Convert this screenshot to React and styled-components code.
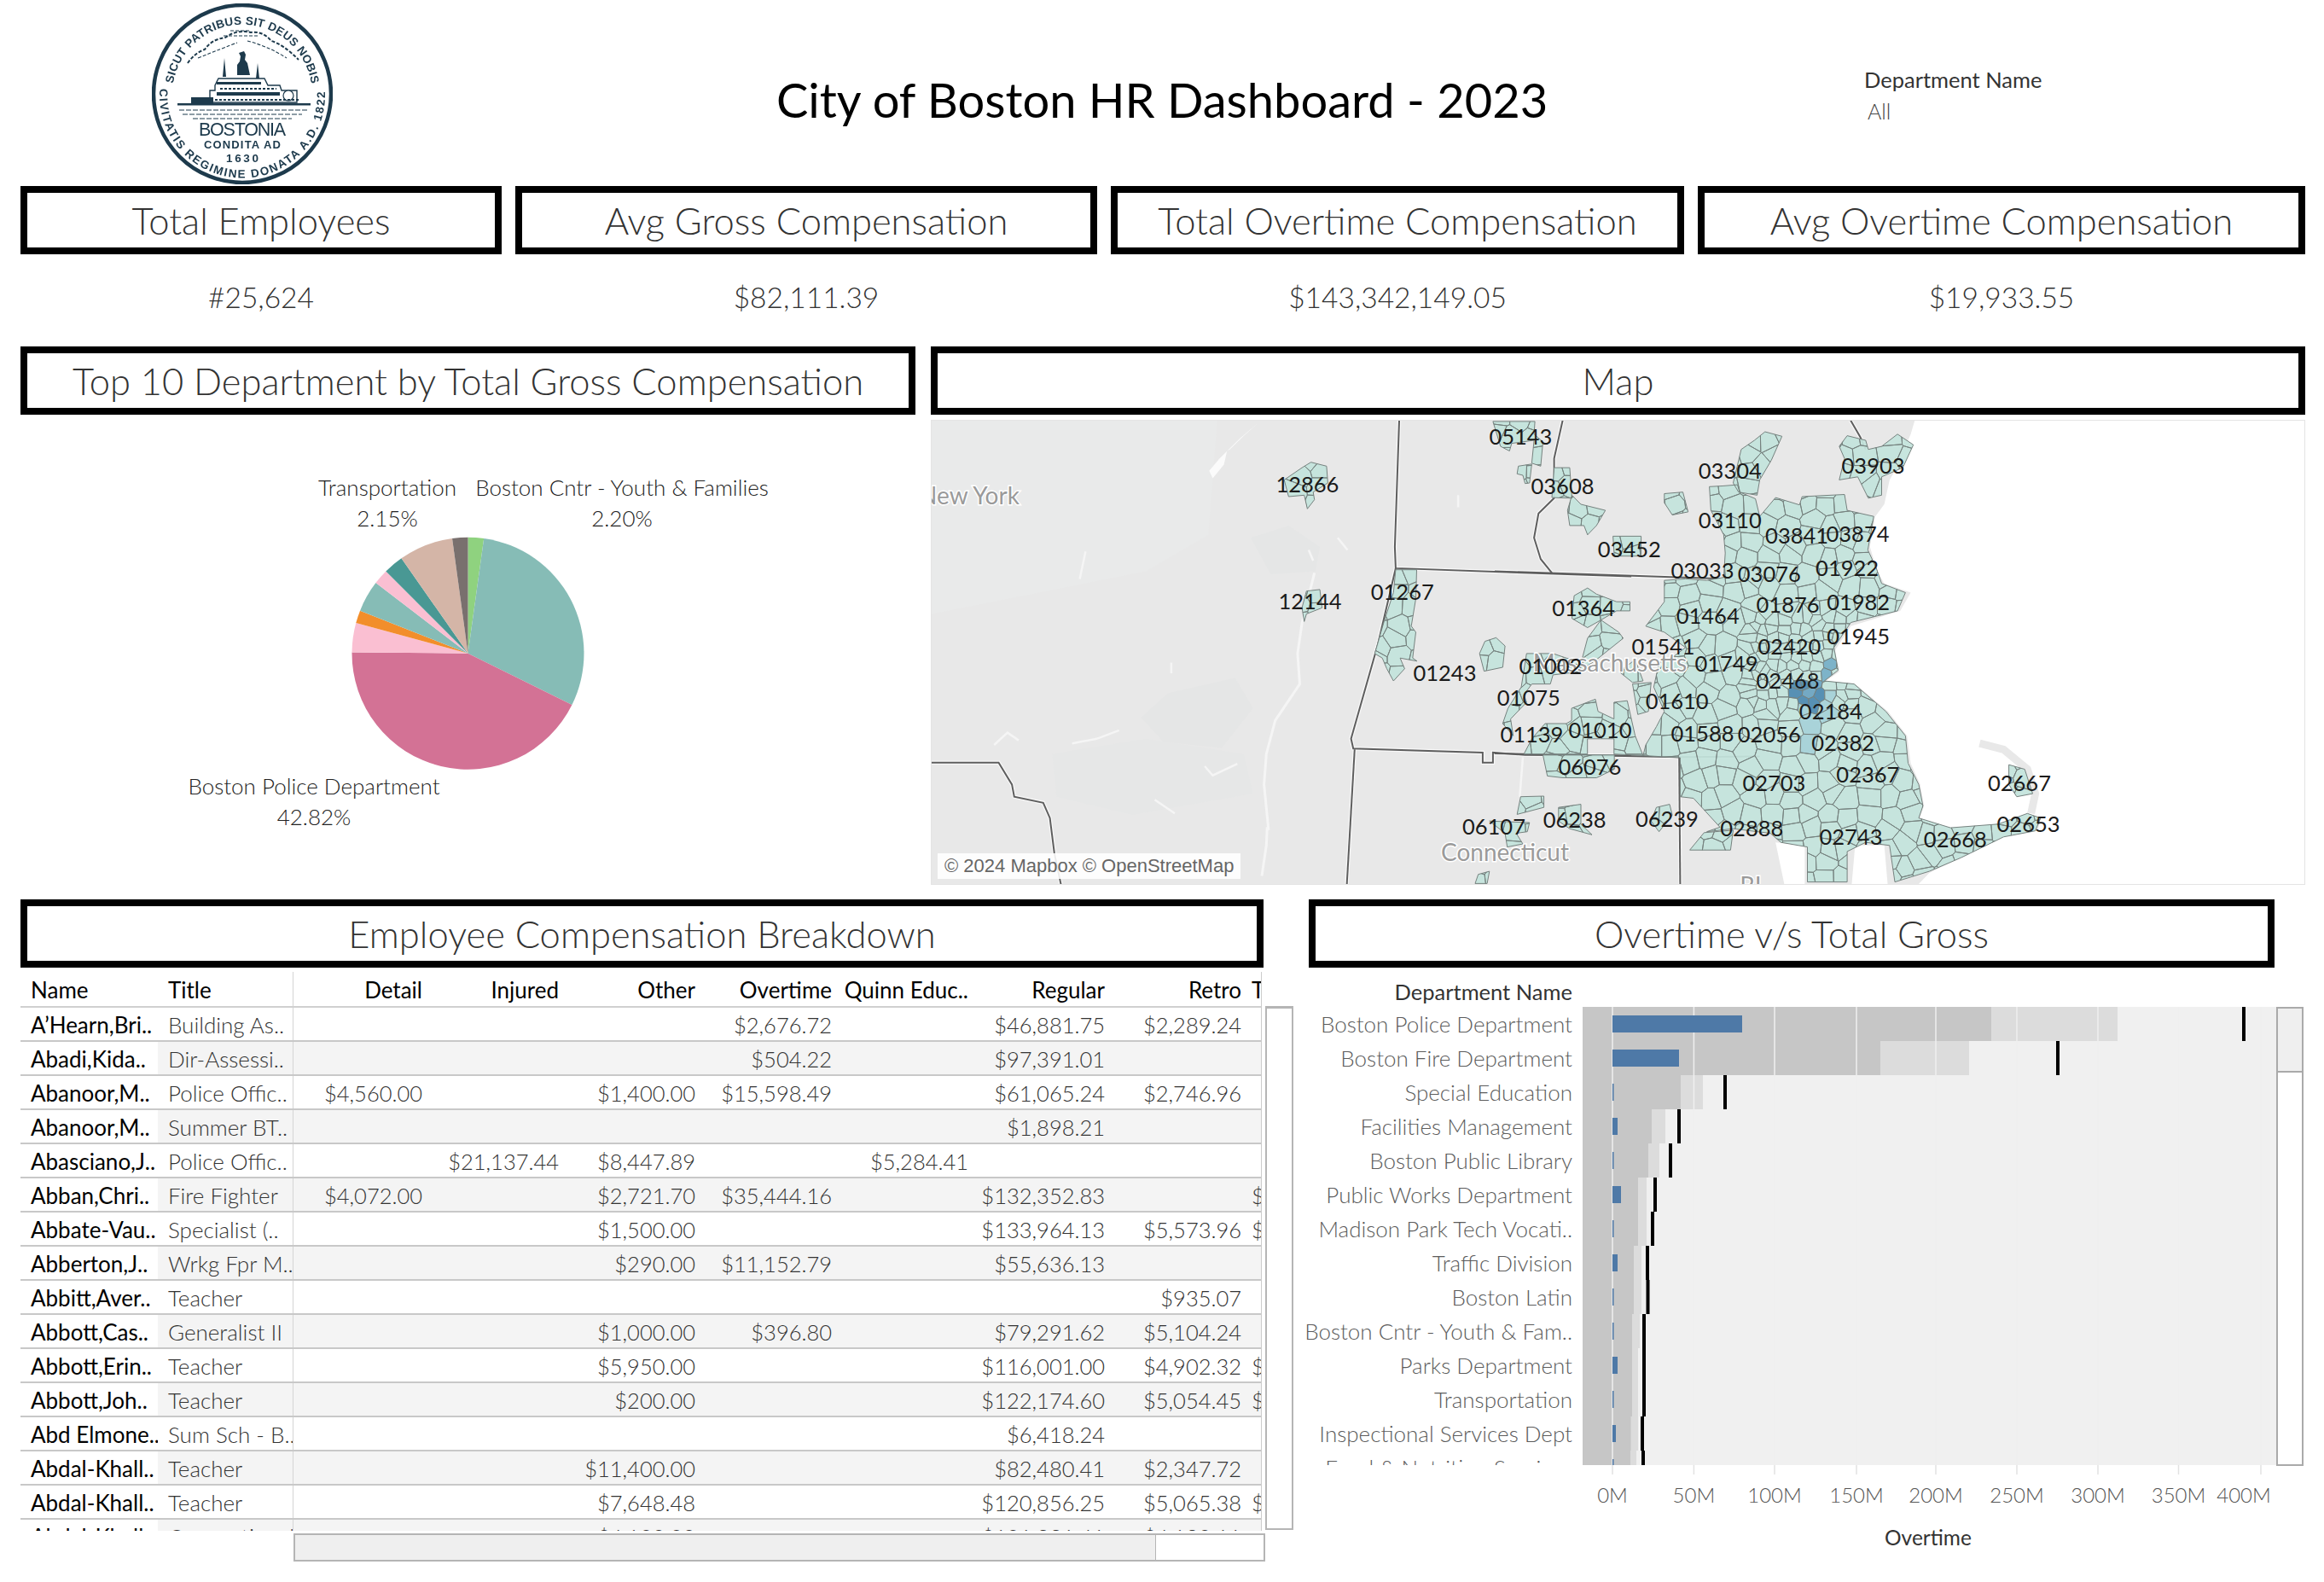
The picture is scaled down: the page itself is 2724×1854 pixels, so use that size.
import React from "react";
import styled, { createGlobalStyle } from "styled-components";

const FONT = '"Lato", "Noto Sans", sans-serif';

const Global = createGlobalStyle`
  html, body { margin: 0; padding: 0; background: #fff; }
  body { font-family: ${FONT}; }
`;

const Page = styled.div`
  width: 2724px;
  height: 1854px;
  padding-left: 24px;
  box-sizing: border-box;
  overflow: hidden;
  background: #fff;
  display: flex;
  flex-direction: column;
`;

const Header = styled.header`
  height: 218px;
  display: grid;
  grid-template-columns: 882px 960px 1fr;
  align-items: center;
  margin-left: -24px;
`;
const SealCell = styled.div`
  padding-left: 178px;
  height: 218px;
  display: flex;
  align-items: center;
`;
const SealSvg = styled.svg`
  width: 212px;
  height: 212px;
  margin-top: 2px;
  filter: blur(0.4px);
`;
const DashTitle = styled.h1`
  margin: 0;
  text-align: center;
  font-size: 56px;
  font-weight: 400;
  color: #000;
  padding-top: 14px;
  white-space: nowrap;
`;
const FilterCell = styled.div`
  padding-left: 343px;
  display: flex;
  flex-direction: column;
  gap: 7px;
  margin-top: 4px;
`;
const FilterLabel = styled.div`
  font-size: 25.5px;
  color: #333;
  white-space: nowrap;
`;
const FilterValue = styled.div`
  font-size: 25px;
  font-weight: 300;
  color: #444;
  padding-left: 4px;
`;

const KpiRow = styled.section`
  display: flex;
  gap: 16px;
  height: 188px;
`;
const KpiCard = styled.div`
  width: ${(p) => p.$w}px;
  display: flex;
  flex-direction: column;
`;
const TitleBox = styled.div`
  box-sizing: border-box;
  width: ${(p) => (p.$w ? p.$w + "px" : "100%")};
  height: 80px;
  border: 8px solid #000;
  display: flex;
  align-items: center;
  justify-content: center;
  font-size: 43.5px;
  font-weight: 300;
  color: #333;
  white-space: nowrap;
  flex: none;
`;
const KpiValue = styled.div`
  flex: 1;
  display: flex;
  align-items: center;
  justify-content: center;
  font-size: 33.5px;
  font-weight: 300;
  color: #333;
  padding-bottom: 8px;
`;

const MidRow = styled.section`
  display: flex;
  gap: 18px;
  height: 648px;
`;
const PiePanel = styled.div`
  width: 1049px;
  display: flex;
  flex-direction: column;
`;
const PieSvg = styled.svg`
  width: 1049px;
  height: 568px;
`;
const PieLabel = styled.text`
  font-family: ${FONT};
  font-size: 26px;
  font-weight: 300;
  fill: #222;
  text-anchor: middle;
  dominant-baseline: central;
`;
const MapPanel = styled.div`
  width: 1611px;
  display: flex;
  flex-direction: column;
`;
const MapFrame = styled.div`
  position: relative;
  box-sizing: border-box;
  margin-top: 6px;
  width: 1611px;
  height: 545px;
  border: 1px solid #e4e4e4;
  overflow: hidden;
`;
const MapSvg = styled.svg`
  display: block;
  width: 1612px;
  height: 545px;
`;
const ZipLabel = styled.text`
  font-family: ${FONT};
  font-size: 25.5px;
  font-weight: 400;
  fill: #1a1a1a;
  text-anchor: middle;
  dominant-baseline: central;
`;
const PlaceLabel = styled.text`
  font-family: ${FONT};
  font-size: 28px;
  fill: #9a9a9a;
  stroke: #fff;
  stroke-width: 3px;
  paint-order: stroke;
  text-anchor: middle;
  dominant-baseline: central;
`;
const Attribution = styled.div`
  position: absolute;
  left: 7px;
  bottom: 6px;
  background: rgba(255, 255, 255, 0.88);
  font-family: "Liberation Sans", Arial, sans-serif;
  font-size: 22px;
  line-height: 30px;
  color: #666;
  padding: 0 8px;
`;

const BottomRow = styled.section`
  display: flex;
  gap: 18px;
`;
const TablePanel = styled.div`
  width: 1492px;
  display: flex;
  flex-direction: column;
`;
const TableArea = styled.div`
  margin-top: 5px;
  display: flex;
  gap: 4px;
`;
const Table = styled.div`
  width: 1455px;
  height: 655px;
  overflow: hidden;
  border-right: 1px solid #ccc;
  box-sizing: content-box;
`;
const GRID = "161px 159px repeat(7, 160px) 1fr";
const HeadRow = styled.div`
  height: 42px;
  box-sizing: border-box;
  display: grid;
  grid-template-columns: ${GRID};
  border-bottom: 2px solid #d0d0d0;
  align-items: center;
`;
const Row = styled.div`
  height: 40px;
  box-sizing: border-box;
  display: grid;
  grid-template-columns: ${GRID};
  border-bottom: 2px solid #c8c8c8;
  align-items: center;
  background: ${(p) => (p.$stripe ? "linear-gradient(to right, #fff 161px, #f4f4f4 161px)" : "#fff")};
`;
const Cell = styled.div`
  height: 100%;
  display: flex;
  align-items: center;
  padding: 2px ${(p) => (p.$left ? "0" : "9px")} 0 ${(p) => (p.$left ? "12px" : "0")};
  justify-content: ${(p) => (p.$left ? "flex-start" : "flex-end")};
  font-size: ${(p) => (p.$left || p.$strong ? "26px" : "25.5px")};
  font-weight: ${(p) => (p.$strong ? 400 : 300)};
  color: ${(p) => (p.$strong ? "#000" : "#333")};
  white-space: nowrap;
  overflow: hidden;
  border-right: ${(p) => (p.$rule ? "1px solid #d4d4d4" : "none")};
  box-sizing: border-box;
`;
const TailCell = styled(Cell)`
  padding: 2px 0 0 3px;
  justify-content: flex-start;
`;
const VBar = styled.div`
  box-sizing: border-box;
  width: 33px;
  height: 614px;
  margin-top: 40px;
  background: #fff;
  border: 2px solid #b5b5b5;
  border-top-width: 3px;
`;
const HBar = styled.div`
  box-sizing: border-box;
  margin-top: 3px;
  margin-left: 320px;
  width: 1139px;
  height: 33px;
  display: flex;
  border: 2px solid #b5b5b5;
`;
const HThumb = styled.div`
  flex: none;
  width: 1008px;
  background: #efefef;
  border-right: 1px solid #b5b5b5;
`;

const ChartPanel = styled.div`
  width: 1190px;
  display: flex;
  flex-direction: column;
`;
const ChartHeadLabel = styled.div`
  height: 46px;
  width: 309px;
  display: flex;
  align-items: center;
  justify-content: flex-end;
  font-size: 25.5px;
  color: #333;
  white-space: nowrap;
  padding-top: 10px;
  box-sizing: border-box;
`;
const ChartBody = styled.div`
  display: flex;
  align-items: flex-start;
`;
const LabelCol = styled.div`
  width: 321px;
  height: 537px;
  margin: 0 12px 0 -12px;
  overflow: hidden;
  flex: none;
`;
const DeptLabel = styled.div`
  height: 40px;
  display: flex;
  align-items: center;
  justify-content: flex-end;
  font-size: 26px;
  font-weight: 300;
  color: #5c5c5c;
  white-space: nowrap;
`;
const ChartSvg = styled.svg`
  flex: none;
  width: 813px;
  height: 640px;
`;
const AxisLabel = styled.text`
  font-family: ${FONT};
  font-size: 24px;
  font-weight: 300;
  fill: #555;
  text-anchor: middle;
  dominant-baseline: central;
`;
const AxisTitle = styled.text`
  font-family: ${FONT};
  font-size: 24.5px;
  fill: #333;
  text-anchor: middle;
  dominant-baseline: central;
`;
const VTrack = styled.div`
  box-sizing: border-box;
  width: 32px;
  height: 538px;
  border: 2px solid #aaa;
  display: flex;
  flex-direction: column;
`;
const VThumb = styled.div`
  height: 73px;
  flex: none;
  background: #efefef;
  border-bottom: 2px solid #aaa;
`;

/* ---------- seal ---------- */
const NAVY = "#1d3a4c";
const SealText = styled.text`
  font-family: "Liberation Sans", Arial, sans-serif;
  font-weight: ${(p) => (p.$thin ? 400 : 700)};
  fill: ${NAVY};
`;
const Seal = () => (
  <SealSvg viewBox="0 0 212 212">
    <defs>
      <path id="sealTop" d="M 25 94 A 82 82 0 0 1 187 94" />
      <path id="sealBot" d="M 9.3 100 A 97 97 0 1 0 202.7 100" />
    </defs>
    <circle cx="106" cy="106" r="104" fill="#fff" stroke={NAVY} strokeWidth="4.5" />
    <SealText fontSize="13.5">
      <textPath href="#sealTop" textLength="232">SICUT PATRIBUS SIT DEUS NOBIS</textPath>
    </SealText>
    <SealText fontSize="13.5">
      <textPath href="#sealBot" textLength="316">CIVITATIS REGIMINE DONATA A.D. 1822</textPath>
    </SealText>
    <path d="M42 70 Q50 58 62 54 Q70 42 86 40 Q100 30 116 34 Q130 32 140 44 Q154 48 172 66" fill="none" stroke={NAVY} strokeWidth="2" strokeDasharray="4 2" />
    <path d="M54 64 Q84 52 100 46 M112 44 Q136 50 158 64 M92 32 H116 M84 38 H126" fill="none" stroke={NAVY} strokeWidth="1.1" strokeDasharray="4 2" />
    <g fill={NAVY}>
      <path d="M83 86 L85 64 L87 86 Z M122 88 L124 70 L126 88 Z" />
      <path d="M100 84 V72 L103 68 L104 62 L102 58 L108 56 L110 60 L109 66 L112 70 L115 84 Z" />
      <path d="M74 96 L78 88 H132 L136 96 L150 96 L152 102 H170 L170 116 H68 L68 102 H74 Z" fill="#fff" stroke={NAVY} strokeWidth="1.4" />
      <path d="M30 117 H186 V119.5 H30 Z" />
      <path d="M46 110 H72 V117 H46 Z M76 104 H150 V108 H76 Z M76 92 H128 V95 H76 Z" />
      <circle cx="160" cy="108" r="6" fill="#fff" stroke={NAVY} strokeWidth="1.2" />
    </g>
    <g stroke={NAVY} strokeWidth="1.8" strokeDasharray="3 2">
      <path d="M80 100 H146" />
      <path d="M74 113 H172" />
    </g>
    <g stroke={NAVY} strokeWidth="1" strokeDasharray="6 2">
      <path d="M32 125 H182" />
      <path d="M36 130 H176" />
      <path d="M48 135 H164" />
    </g>
    <SealText $thin x="106" y="155" fontSize="21.5" textAnchor="middle" textLength="102">BOSTONIA</SealText>
    <SealText x="106" y="170" fontSize="13" textAnchor="middle" textLength="90">CONDITA AD</SealText>
    <SealText x="106" y="186" fontSize="13.5" textAnchor="middle" textLength="38">1630</SealText>
  </SealSvg>
);

/* ---------- pie ---------- */
const SLICES = [
  [0, 7.9, "#8FD27F"],
  [7.9, 116.3, "#86BCB6"],
  [116.3, 270.5, "#D37295"],
  [270.5, 285.2, "#FABFD2"],
  [285.2, 291.6, "#F28E2B"],
  [291.6, 307.4, "#86BCB6"],
  [307.4, 315, "#FABFD2"],
  [315, 325, "#499894"],
  [325, 352.2, "#D4B5A7"],
  [352.2, 360, "#79706E"],
];
const arc = (cx, cy, r, a0, a1) => {
  const p = (a) => [cx + r * Math.sin((a * Math.PI) / 180), cy - r * Math.cos((a * Math.PI) / 180)];
  const [x0, y0] = p(a0);
  const [x1, y1] = p(a1);
  return `M${cx} ${cy} L${x0.toFixed(2)} ${y0.toFixed(2)} A${r} ${r} 0 ${a1 - a0 > 180 ? 1 : 0} 1 ${x1.toFixed(2)} ${y1.toFixed(2)} Z`;
};
const PieChart = () => (
  <PieSvg viewBox="0 0 1049 568">
    {SLICES.map(([a, b, c]) => (
      <path key={a} d={arc(524.5, 279.7, 136, a, b)} fill={c} />
    ))}
    <PieLabel x="430" y="84.5">Transportation</PieLabel>
    <PieLabel x="430" y="120.5">2.15%</PieLabel>
    <PieLabel x="705" y="84.5">Boston Cntr - Youth &amp; Families</PieLabel>
    <PieLabel x="705" y="120.5">2.20%</PieLabel>
    <PieLabel x="344" y="435">Boston Police Department</PieLabel>
    <PieLabel x="344" y="471">42.82%</PieLabel>
  </PieSvg>
);

/* ---------- map ---------- */
const z4 = (pts) => pts.map(([x, y]) => [0.523 * x, -2 + 0.357 * y]);
const z5 = (pts) => pts.map(([x, y]) => [660 + 0.6212 * x, -2 + 0.357 * y]);
const str = (pts) => pts.map((p) => p[0].toFixed(1) + "," + p[1].toFixed(1)).join(" ");

const MAIN = z5([[430,220],[458,216],[462,240],[492,262],[500,320],[530,258],[575,282],[580,255],[660,248],[665,300],[715,320],[704,430],[720,490],[730,540],[775,570],[760,630],[672,668],[640,750],[648,825],[622,860],[678,870],[738,960],[775,1040],[780,1130],[800,1200],[808,1270],[800,1310],[860,1342],[950,1330],[1005,1295],[1030,1310],[1020,1352],[960,1372],[880,1440],[820,1485],[755,1520],[745,1400],[700,1390],[665,1420],[665,1520],[590,1520],[590,1405],[540,1390],[520,1360],[450,1345],[400,1355],[425,1340],[375,1245],[350,1240],[350,1112],[280,1105],[285,1070],[305,1010],[320,960],[300,880],[310,800],[330,790],[360,750],[320,700],[285,680],[320,600],[320,530],[360,525],[400,530],[432,520],[435,440],[432,380],[408,300],[405,222]]);
const ZIPS = [
  MAIN,
  z5([[650,90],[665,55],[700,70],[705,100],[730,90],[760,50],[790,85],[770,160],[730,190],[730,250],[705,260],[685,190],[650,200],[660,130]]),
  z5([[320,245],[355,240],[365,305],[335,315],[320,275]]),
  z5([[490,70],[510,42],[542,57],[522,135],[500,200],[495,250],[460,240],[450,210],[465,100]]),
  z5([[305,1275],[330,1265],[335,1300],[310,1355],[295,1320]]),
  z5([[260,870],[295,865],[290,960],[270,970]]),
  z5([[235,830],[265,790],[280,860],[260,865]]),
  z5([[395,1358],[450,1350],[445,1415],[368,1415]]),
  z5([[970,1135],[1000,1150],[1015,1230],[985,1240],[970,1200]]),
  z5([[60,770],[110,770],[135,785],[165,800],[160,830],[110,840],[105,870],[70,870],[55,905],[60,930],[30,985],[35,1040],[15,1000],[25,950],[50,880]]),
  z5([[55,1100],[70,1050],[95,1000],[135,1000],[145,990],[145,950],[190,920],[195,960],[225,985],[225,930],[250,925],[265,1040],[280,1105],[225,1100],[225,1050],[175,1050],[175,1100]]),
  z4([[830,160],[850,142],[885,155],[888,210],[855,240],[858,265],[842,295],[835,250],[800,255],[790,200]]),
  z4([[840,565],[870,560],[875,620],[840,640],[835,665],[830,620]]),
  z4([[1040,495],[1087,495],[1085,590],[1075,680],[1085,700],[1078,785],[1088,795],[1050,785],[1060,820],[1035,860],[1020,820],[1010,785],[993,770],[1015,660],[1035,570]]),
  z4([[1258,8],[1352,8],[1350,50],[1370,75],[1365,155],[1345,145],[1350,70],[1300,80],[1295,105],[1275,90]]),
  z4([[1315,155],[1345,148],[1340,210],[1330,212],[1325,185],[1312,180]]),
  z4([[1395,160],[1430,160],[1435,260],[1390,258]]),
  z4([[1435,250],[1455,280],[1510,300],[1490,350],[1470,380],[1462,350],[1430,350],[1425,300]]),
  z4([[1527,385],[1590,385],[1590,450],[1530,450]]),
  z4([[1240,730],[1265,718],[1285,745],[1280,815],[1238,828],[1228,770]]),
  z4([[1440,580],[1470,555],[1490,575],[1535,600],[1565,600],[1565,630],[1535,630],[1500,660],[1470,685],[1435,655]]),
  z4([[1500,660],[1540,700],[1550,720],[1490,790],[1450,830],[1470,720]]),
  z4([[1370,1103],[1530,1103],[1530,1150],[1490,1178],[1415,1178],[1380,1172]]),
  z4([[1320,1240],[1372,1238],[1372,1275],[1312,1298]]),
  z4([[1405,1275],[1455,1265],[1455,1330],[1480,1365],[1430,1345],[1405,1320]]),
  z4([[1250,1320],[1340,1325],[1335,1355],[1310,1360],[1325,1395],[1290,1405],[1285,1360]]),
  z4([[1225,1495],[1250,1485],[1245,1525],[1218,1525]]),
];
const DARK = z5([[562,870],[612,850],[632,890],[604,945],[576,930]]);
const MID = z5([[608,790],[646,785],[636,842],[604,842]]);
const LIGHT = z5([[570,945],[645,900],[630,990],[645,1015],[600,1085],[582,1065],[575,985]]);

const inside = (pt, poly) => {
  let hit = false;
  for (let i = 0, j = poly.length - 1; i < poly.length; j = i++) {
    const [xi, yi] = poly[i];
    const [xj, yj] = poly[j];
    if (yi > pt[1] !== yj > pt[1] && pt[0] < ((xj - xi) * (pt[1] - yi)) / (yj - yi) + xi) hit = !hit;
  }
  return hit;
};
const clipHalf = (poly, a, b, c) => {
  const out = [];
  for (let i = 0; i < poly.length; i++) {
    const p = poly[i];
    const q = poly[(i + 1) % poly.length];
    const dp = a * p[0] + b * p[1] - c;
    const dq = a * q[0] + b * q[1] - c;
    if (dp <= 0) out.push(p);
    if (dp < 0 !== dq < 0 && dp !== dq) {
      const t = dp / (dp - dq);
      out.push([p[0] + t * (q[0] - p[0]), p[1] + t * (q[1] - p[1])]);
    }
  }
  return out;
};
const buildCells = () => {
  let s = 12345;
  const rnd = () => ((s = (s * 16807) % 2147483647) - 1) / 2147483646;
  const sites = [];
  for (let y = 0; y < 560; y += 20) {
    for (let x = 430; x < 1320; x += 23) {
      const dense = x > 960 && x < 1080 && y > 230 && y < 340;
      if (!dense) sites.push([x + rnd() * 16 - 8, y + rnd() * 14 - 7]);
    }
  }
  for (let y = 232; y < 340; y += 11) {
    for (let x = 960; x < 1080; x += 13) sites.push([x + rnd() * 8 - 4, y + rnd() * 7 - 3.5]);
  }
  return sites.map((p, i) => {
    let poly = [[p[0] - 60, p[1] - 60], [p[0] + 60, p[1] - 60], [p[0] + 60, p[1] + 60], [p[0] - 60, p[1] + 60]];
    sites.forEach((q, j) => {
      if (i === j || Math.abs(p[0] - q[0]) > 90 || Math.abs(p[1] - q[1]) > 90) return;
      const a = q[0] - p[0];
      const b = q[1] - p[1];
      const c = (q[0] * q[0] + q[1] * q[1] - p[0] * p[0] - p[1] * p[1]) / 2;
      poly = clipHalf(poly, a, b, c);
    });
    const fill = inside(p, DARK) ? (i % 3 === 0 ? "#74a9c4" : "#5790b4") : inside(p, MID) ? "#7db3c9" : inside(p, LIGHT) ? "#a9d3d9" : "none";
    return { pts: str(poly), fill };
  });
};
const CELLS = buildCells();

const LAKE = z4([[640,60],[662,105],[655,150],[630,195],[622,170],[645,130],[690,65],[730,15],[700,55],[668,100],[662,105]]);
const blob = (pts, fill, k) => <polygon key={k} points={str(z4(pts))} fill={fill} />;
const LINES = [
  z4([[1048,0],[1038,420],[1040,490],[1568,517]]),
  z5([[0,500],[530,530]]),
  z4([[1415,0],[1395,130],[1395,260],[1360,310],[1350,390],[1365,460],[1390,505]]),
  z4([[1040,490],[1000,740],[940,1050],[945,1082],[1235,1095],[1235,1128],[1258,1128],[1258,1095],[1330,1103],[1568,1105]]),
  z5([[0,1098],[348,1110],[500,1108]]),
  z5([[348,1110],[350,1540]]),
  z4([[948,1085],[930,1540]]),
  z4([[0,1128],[150,1128],[180,1200],[185,1240],[250,1260],[265,1310],[275,1425],[290,1530]]),
  z5([[670,0],[690,60],[700,100]]),
];
const RIVERS = [
  z4([[858,505],[830,670],[820,770],[825,870],[770,990],[750,1100],[745,1200],[755,1350]]),
  z4([[740,1500],[750,1400],[752,1340]]),
  z4([[1325,1110],[1318,1240]]),
  z4([[140,1070],[170,1030],[195,1055]]),
  z4([[315,1065],[370,1050],[420,1022]]),
  z4([[612,1140],[630,1170],[685,1132]]),
  z4([[500,1250],[545,1295]]),
  z4([[345,435],[332,525]]),
  z4([[910,390],[932,430]]),
  z4([[845,430],[855,465]]),
  z4([[537,800],[537,835]]),
  z4([[1180,250],[1180,290]]),
];
const ZIPLBL4 = [["05143",1320,55],["12866",842,212],["03608",1414,218],["12144",848,598],["01267",1055,565],["01243",1150,833],["01002",1387,810],["01075",1338,912],["01139",1345,1035],["01010",1498,1020],["06076",1475,1140],["06107",1260,1337],["06238",1441,1314],["01364",1461,620]];
const ZIPLBL5 = [["03304",444,167],["03903",714,152],["03110",444,330],["03841",570,380],["03874",685,375],["03452",254,425],["03033",392,497],["03076",518,508],["01922",665,487],["01876",553,608],["01982",686,600],["01464",402,643],["01945",686,712],["02420",556,744],["01541",318,744],["01749",437,800],["02468",553,857],["01610",344,923],["02184",634,957],["01588",392,1030],["02056",518,1035],["02382",657,1062],["02367",704,1165],["02703",527,1192],["02667",990,1192],["06239",325,1310],["02888",485,1343],["02653",1007,1328],["02743",672,1370],["02668",869,1378]];

const MapChart = () => (
  <MapSvg viewBox="0 0 1612 545">
    <defs>
      <clipPath id="zipClip">
        {ZIPS.map((p, i) => <polygon key={i} points={str(p)} />)}
      </clipPath>
    </defs>
    <rect width="1612" height="545" fill="#e8e8e8" />
    {blob([[0,0],[640,0],[620,380],[480,500],[0,640]], "#e9eaea", "b0")}
    {blob([[715,390],[800,350],[870,420],[860,500],[760,510]], "#e5e6e6", "b1")}
    {blob([[530,900],[680,850],[720,950],[650,1080],[520,1060],[470,980]], "#e5e6e6", "b2")}
    {blob([[270,1100],[480,1050],[700,1100],[720,1230],[450,1300],[280,1240]], "#e6e7e7", "b3")}
    <polygon points={str(z5([[795,-10],[785,50],[770,110],[755,170],[745,200],[735,280],[718,320],[708,420],[722,500],[735,540],[785,570],[765,630],[672,680],[642,760],[650,830],[625,860],[680,870],[742,960],[778,1040],[785,1130],[803,1200],[810,1270],[800,1320],[860,1345],[950,1335],[1005,1295],[1030,1310],[1025,1350],[960,1370],[880,1440],[820,1490],[760,1600],[1700,1600],[1700,-10]]))} fill="#fff" />
    <polygon points={str(z5([[745,1600],[735,1400],[680,1400],[670,1600]]))} fill="#fff" />
    <polygon points={str(z5([[585,1600],[585,1400],[530,1390],[555,1600]]))} fill="#fff" />
    <polyline points={str(z5([[1012,1295],[1020,1230],[1005,1150],[960,1085],[915,1065]]))} fill="none" stroke="#e8e8e8" strokeWidth="9" />
    <polygon points={str(LAKE)} fill="#fbfbfb" />
    {RIVERS.map((r, i) => (
      <polyline key={i} points={str(r)} fill="none" stroke="#f5f5f5" strokeWidth={i < 2 ? 3 : 2.5} />
    ))}
    {LINES.map((l, i) => (
      <polyline key={i} points={str(l)} fill="none" stroke="#f8f8f8" strokeWidth="4.5" />
    ))}
    {LINES.map((l, i) => (
      <polyline key={i} points={str(l)} fill="none" stroke="#5e5e5e" strokeWidth="2" />
    ))}
    {ZIPS.map((p, i) => <polygon key={i} points={str(p)} fill="#c4e3dc" fillOpacity="0.94" />)}
    <g clipPath="url(#zipClip)">
      {CELLS.map((c, i) => <polygon key={i} points={c.pts} fill={c.fill} stroke="#76827f" strokeWidth="1" />)}
    </g>
    {ZIPS.map((p, i) => <polygon key={i} points={str(p)} fill="none" stroke="#76827f" strokeWidth="1" />)}
    <PlaceLabel x="44" y="87">New York</PlaceLabel>
    <PlaceLabel x="672" y="505">Connecticut</PlaceLabel>
    <PlaceLabel x="795" y="283">Massachusetts</PlaceLabel>
    <PlaceLabel x="960" y="544">RI</PlaceLabel>
    {ZIPLBL4.map(([t, x, y]) => <ZipLabel key={t} x={0.523 * x} y={-2 + 0.357 * y}>{t}</ZipLabel>)}
    {ZIPLBL5.map(([t, x, y]) => <ZipLabel key={t} x={660 + 0.6212 * x} y={-2 + 0.357 * y}>{t}</ZipLabel>)}
  </MapSvg>
);

/* ---------- table ---------- */
const COLS = ["Detail", "Injured", "Other", "Overtime", "Quinn Educ..", "Regular", "Retro"];
const ROWS = [
  ["A\u2019Hearn,Bri..", "Building As..", "", "", "", "$2,676.72", "", "$46,881.75", "$2,289.24", ""],
  ["Abadi,Kida..", "Dir-Assessi..", "", "", "", "$504.22", "", "$97,391.01", "", ""],
  ["Abanoor,M..", "Police Offic..", "$4,560.00", "", "$1,400.00", "$15,598.49", "", "$61,065.24", "$2,746.96", ""],
  ["Abanoor,M..", "Summer BT..", "", "", "", "", "", "$1,898.21", "", ""],
  ["Abasciano,J..", "Police Offic..", "", "$21,137.44", "$8,447.89", "", "$5,284.41", "", "", ""],
  ["Abban,Chri..", "Fire Fighter", "$4,072.00", "", "$2,721.70", "$35,444.16", "", "$132,352.83", "", "$"],
  ["Abbate-Vau..", "Specialist (..", "", "", "$1,500.00", "", "", "$133,964.13", "$5,573.96", "$"],
  ["Abberton,J..", "Wrkg Fpr M..", "", "", "$290.00", "$11,152.79", "", "$55,636.13", "", ""],
  ["Abbitt,Aver..", "Teacher", "", "", "", "", "", "", "$935.07", ""],
  ["Abbott,Cas..", "Generalist II", "", "", "$1,000.00", "$396.80", "", "$79,291.62", "$5,104.24", ""],
  ["Abbott,Erin..", "Teacher", "", "", "$5,950.00", "", "", "$116,001.00", "$4,902.32", "$"],
  ["Abbott,Joh..", "Teacher", "", "", "$200.00", "", "", "$122,174.60", "$5,054.45", "$"],
  ["Abd Elmone..", "Sum Sch - B..", "", "", "", "", "", "$6,418.24", "", ""],
  ["Abdal-Khall..", "Teacher", "", "", "$11,400.00", "", "", "$82,480.41", "$2,347.72", ""],
  ["Abdal-Khall..", "Teacher", "", "", "$7,648.48", "", "", "$120,856.25", "$5,065.38", "$"],
  ["Abdal-Khall..", "Occupational..", "", "", "$4,100.00", "", "", "$101,331.41", "$4,180.11", ""],
];
const CompTable = () => (
  <Table>
    <HeadRow>
      <Cell $left $strong>Name</Cell>
      <Cell $left $strong $rule>Title</Cell>
      {COLS.map((c) => <Cell key={c} $strong>{c}</Cell>)}
      <TailCell $strong>T</TailCell>
    </HeadRow>
    {ROWS.map((r, i) => (
      <Row key={i} $stripe={i % 2 === 1}>
        <Cell $left $strong>{r[0]}</Cell>
        <Cell $left $rule>{r[1]}</Cell>
        {r.slice(2, 9).map((v, j) => <Cell key={j}>{v}</Cell>)}
        <TailCell>{r[9]}</TailCell>
      </Row>
    ))}
  </Table>
);

/* ---------- bullet chart ---------- */
const DEPTS = ["Boston Police Department","Boston Fire Department","Special Education","Facilities Management","Boston Public Library","Public Works Department","Madison Park Tech Vocati..","Traffic Division","Boston Latin","Boston Cntr - Youth & Fam..","Parks Department","Transportation","Inspectional Services Dept","Food & Nutrition Services"];
/* dark band end, light band end, reference line, blue bar width (px from the plot's left edge; bar from the zero line) */
const BANDS = [
  [479,627,775,152],[349,453,557,78],[115,141,167,1.5],[81,97,113,6],[77,90,103,1.5],[65,75,85,10],[65,75,82,1.5],
  [60,69,76,6],[60,69,76.5,1.5],[58,67,72,1.5],[58,65,72,6],[58,65,72,1.5],[56.5,65,70,4],[56,63,71,1.5],
];
const ZERO = 35;
const TICKS = [["0M",0,0],["50M",95.4,95.4],["100M",190,190],["150M",286,286],["200M",379,379],["250M",474,474],["300M",569,569],["350M",663.5,663.5],["400M",760,740]];
const Bullet = () => (
  <ChartSvg viewBox="0 0 813 640">
    <rect width="813" height="537" fill="#f0f0f0" />
    {BANDS.map(([d, l], i) => (
      <g key={i}>
        <rect x="0" y={i * 40} width={l} height={Math.min(40, 537 - i * 40)} fill="#dcdcdc" />
        <rect x="0" y={i * 40} width={d} height={Math.min(40, 537 - i * 40)} fill="#c6c6c6" />
      </g>
    ))}
    {TICKS.map(([t, x]) => (
      <g key={t}>
        <line x1={ZERO + x} x2={ZERO + x} y1="0" y2="537" stroke="#efefef" strokeWidth="1.5" />
        <line x1={ZERO + x} x2={ZERO + x} y1="537" y2="548" stroke="#e2e2e2" strokeWidth="1.5" />
      </g>
    ))}
    {BANDS.map(([d, l, r, b], i) => (
      <g key={i}>
        <rect x={ZERO} y={i * 40 + 10} width={b} height={Math.min(20, 537 - i * 40 - 10)} fill="#4E79A7" />
        <rect x={r - 2} y={i * 40} width="4" height={Math.min(40, 537 - i * 40)} fill="#000" />
      </g>
    ))}
    {TICKS.map(([t, x, lx]) => (
      <AxisLabel key={t} x={ZERO + lx} y="571">{t}</AxisLabel>
    ))}
    <AxisTitle x="405" y="621">Overtime</AxisTitle>
  </ChartSvg>
);

const KPIS = [
  ["Total Employees", "#25,624", 564],
  ["Avg Gross Compensation", "$82,111.39", 682],
  ["Total Overtime Compensation", "$143,342,149.05", 672],
  ["Avg Overtime Compensation", "$19,933.55", 712],
];

export default function App() {
  return (
    <Page>
      <Global />
      <Header>
        <SealCell><Seal /></SealCell>
        <DashTitle>City of Boston HR Dashboard - 2023</DashTitle>
        <FilterCell>
          <FilterLabel>Department Name</FilterLabel>
          <FilterValue>All</FilterValue>
        </FilterCell>
      </Header>
      <KpiRow>
        {KPIS.map(([t, v, w]) => (
          <KpiCard key={t} $w={w}>
            <TitleBox>{t}</TitleBox>
            <KpiValue>{v}</KpiValue>
          </KpiCard>
        ))}
      </KpiRow>
      <MidRow>
        <PiePanel>
          <TitleBox>Top 10 Department by Total Gross Compensation</TitleBox>
          <PieChart />
        </PiePanel>
        <MapPanel>
          <TitleBox>Map</TitleBox>
          <MapFrame>
            <MapChart />
            <Attribution>© 2024 Mapbox © OpenStreetMap</Attribution>
          </MapFrame>
        </MapPanel>
      </MidRow>
      <BottomRow>
        <TablePanel>
          <TitleBox $w={1457}>Employee Compensation Breakdown</TitleBox>
          <TableArea>
            <CompTable />
            <VBar />
          </TableArea>
          <HBar><HThumb /></HBar>
        </TablePanel>
        <ChartPanel>
          <TitleBox $w={1132}>Overtime v/s Total Gross</TitleBox>
          <ChartHeadLabel>Department Name</ChartHeadLabel>
          <ChartBody>
            <LabelCol>
              {DEPTS.map((d) => <DeptLabel key={d}>{d}</DeptLabel>)}
            </LabelCol>
            <Bullet />
            <VTrack><VThumb /></VTrack>
          </ChartBody>
        </ChartPanel>
      </BottomRow>
    </Page>
  );
}
